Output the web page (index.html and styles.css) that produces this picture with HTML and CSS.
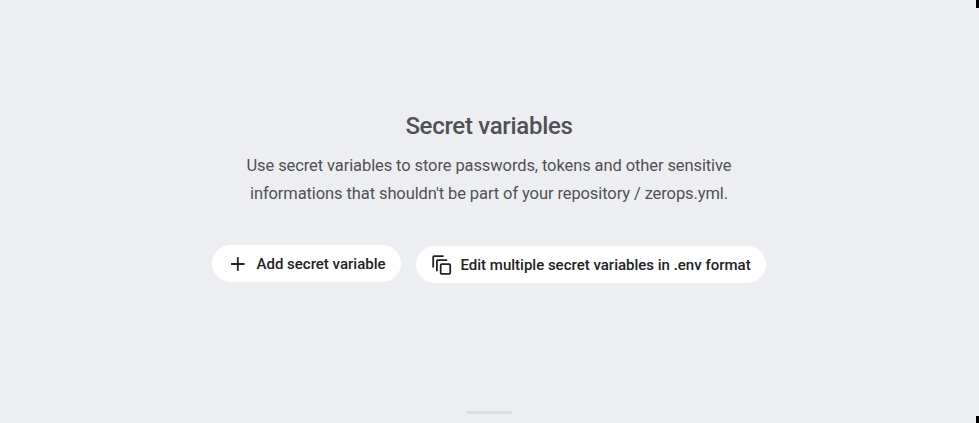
FILE: index.html
```html
<!DOCTYPE html>
<html lang="en">
<head>
<meta charset="utf-8">
<title>Secret variables</title>
<link rel="stylesheet" href="styles.css">
</head>
<body>
<main class="panel">
  <h1 class="title">Secret variables</h1>
  <p class="description">Use secret variables to store passwords, tokens and other sensitive<br>informations that shouldn't be part of your repository / zerops.yml.</p>
  <div class="actions">
    <button class="button button-add" type="button">
      <svg class="icon-add" viewBox="0 0 20 20"><path d="M9.8 3.3v13.4M3.1 10h13.4"/></svg>
      <span>Add secret variable</span>
    </button>
    <button class="button button-edit" type="button">
      <svg class="icon-copy" viewBox="0 0 20 20"><path d="M1.2 12.4V1.9q0-.8.8-.8h9.6M4.9 16.2V5.9q0-.8.8-.8h9.5"/><rect x="8.7" y="9.1" width="9.5" height="9.8" rx=".9"/></svg>
      <span>Edit multiple secret variables in .env format</span>
    </button>
  </div>
  <div class="handle"></div>
</main>
<i class="corner corner-top"></i>
<i class="corner corner-bottom"></i>
</body>
</html>
```
FILE: styles.css
```css
* { box-sizing: border-box; }
body {
  margin: 0;
  background: #edeef2;
  font-family: Roboto, sans-serif;
  overflow: hidden;
}
.panel {
  display: flex;
  flex-direction: column;
  align-items: center;
  height: 423px;
  padding: 110px 1px 0 0;
}
.title {
  margin: 0;
  font-size: 24px;
  line-height: 32px;
  font-weight: 500;
  letter-spacing: -0.3px;
  color: #505153;
}
.description {
  margin: 10px 0 0;
  font-size: 16.5px;
  line-height: 28px;
  letter-spacing: -0.1px;
  text-align: center;
  color: #505153;
}
.actions {
  display: flex;
  gap: 15px;
  margin-top: 37px;
}
.button {
  display: flex;
  align-items: center;
  height: 37px;
  border: 0;
  border-radius: 19px;
  background: #fff;
  color: #222224;
  font: 500 15px/20px Roboto, sans-serif;
  white-space: nowrap;
  padding: 0;
}
.button-add { width: 189px; padding-left: 16px; gap: 8.5px; }
.button-edit { width: 350px; margin-top: 1px; padding-left: 16px; gap: 8.5px; }
.button svg { flex: none; width: 20px; height: 20px; fill: none; stroke: #222224; stroke-width: 1.8; }
.handle {
  width: 46px;
  height: 3px;
  margin: auto 0 9px;
  border-radius: 2px;
  background: #dcdde1;
}
.corner { position: absolute; right: 0; width: 3px; background: #000; }
.corner-top { top: 0; height: 8px; }
.corner-bottom { bottom: 0; height: 7px; }
```
